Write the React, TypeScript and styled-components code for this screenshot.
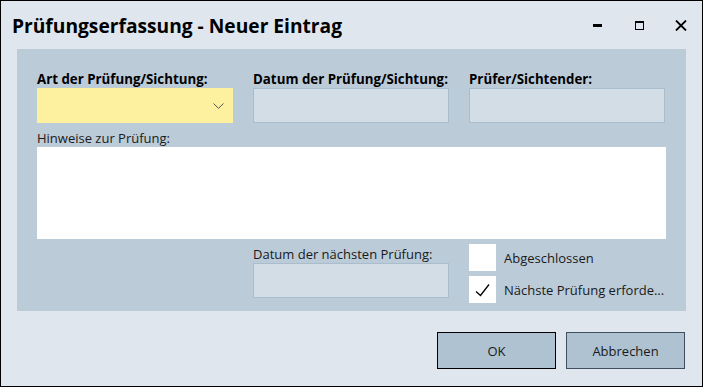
import React from "react";
import styled, { createGlobalStyle } from "styled-components";

const Global = createGlobalStyle`
  html, body { margin: 0; padding: 0; background: #dfe6ee; }
  * { box-sizing: border-box; }
  body { font-family: "Open Sans", "Noto Sans", "Liberation Sans", sans-serif; }
`;

const Window = styled.div`
  width: 703px;
  height: 387px;
  border: 1px solid #000;
  background: #dfe6ee;
  display: flex;
  flex-direction: column;
  color: #111;
`;

const TitleBar = styled.div`
  height: 48px;
  display: flex;
  align-items: center;
  padding-left: 11px;
`;

const Title = styled.h1`
  margin: 0;
  font-size: 19.2px;
  font-weight: 700;
  letter-spacing: 0;
  flex: 1;
  color: #000;
`;

const Controls = styled.div`
  display: flex;
  align-items: center;
  height: 100%;
`;

const ControlButton = styled.div`
  width: 42px;
  height: 100%;
  display: flex;
  align-items: center;
  justify-content: center;
`;

const Panel = styled.div`
  margin: 0 16px;
  height: 262px;
  background: #bccbd8;
  padding: 22px 20px 0 20px;
  display: flex;
  flex-direction: column;
`;

const Row = styled.div<{ $top?: number }>`
  display: grid;
  grid-template-columns: 196px 196px 196px;
  column-gap: 20px;
  margin-top: ${(p) => p.$top ?? 0}px;
`;

const Field = styled.div<{ $offset?: number; $top?: number }>`
  display: flex;
  flex-direction: column;
  padding-top: ${(p) => p.$offset ?? 0}px;
  margin-top: ${(p) => p.$top ?? 0}px;
`;

const Label = styled.label<{ $bold?: boolean }>`
  display: block;
  height: 17px;
  line-height: 17px;
  font-size: ${(p) => (p.$bold ? "13.3px" : "13px")};
  font-weight: ${(p) => (p.$bold ? 700 : 400)};
  color: ${(p) => (p.$bold ? "#000" : "#1a1a1a")};
  white-space: nowrap;
`;

const Input = styled.div`
  height: 35px;
  background: #d3dde6;
  border: 1px solid #aabdcc;
`;

const Combo = styled.div`
  height: 35px;
  background: #fdf1a0;
  display: flex;
  align-items: center;
  justify-content: flex-end;
  padding-right: 9px;
`;

const Notes = styled.div`
  height: 92px;
  width: 629px;
  background: #fff;
`;

const Checks = styled.div`
  display: flex;
  flex-direction: column;
  gap: 5px;
`;

const CheckRow = styled.div`
  display: flex;
  align-items: center;
  gap: 8px;
  height: 27px;
`;

const Box = styled.div`
  width: 27px;
  height: 27px;
  background: #fff;
  display: flex;
  align-items: center;
  justify-content: center;
  flex-shrink: 0;
`;

const CheckText = styled.span`
  font-size: 13px;
  color: #1a1a1a;
  white-space: nowrap;
`;

const Footer = styled.div`
  display: flex;
  justify-content: flex-end;
  gap: 10px;
  padding: 21px 17px 0 0;
`;

const Button = styled.button<{ $default?: boolean }>`
  width: 119px;
  height: 37px;
  background: #aec2d1;
  border: 1px solid ${(p) => (p.$default ? "#000" : "#3d4f61")};
  font-family: inherit;
  font-size: 13px;
  color: #1a1a1a;
  padding: 0;
`;

export default function App() {
  return (
    <>
      <Global />
      <Window>
        <TitleBar>
          <Title>Prüfungserfassung - Neuer Eintrag</Title>
          <Controls>
            <ControlButton>
              <svg width="9" height="9" viewBox="0 0 9 9">
                <rect x="0" y="3" width="9" height="3" fill="#000" />
              </svg>
            </ControlButton>
            <ControlButton>
              <svg width="9" height="9" viewBox="0 0 9 9">
                <rect x="0.5" y="0.5" width="8" height="8" fill="none" stroke="#000" strokeWidth="1" />
                <rect x="0" y="0" width="9" height="2" fill="#000" />
              </svg>
            </ControlButton>
            <ControlButton>
              <svg width="12" height="11" viewBox="0 0 12 11">
                <path d="M1 0.5 L11 10.5 M11 0.5 L1 10.5" stroke="#000" strokeWidth="1.8" />
              </svg>
            </ControlButton>
          </Controls>
        </TitleBar>
        <Panel>
          <Row>
            <Field>
              <Label $bold>Art der Prüfung/Sichtung:</Label>
              <Combo>
                <svg width="11" height="6" viewBox="0 0 11 6">
                  <path d="M0.5 0.5 L5.5 5.3 L10.5 0.5" fill="none" stroke="#555" strokeWidth="1" />
                </svg>
              </Combo>
            </Field>
            <Field>
              <Label $bold>Datum der Prüfung/Sichtung:</Label>
              <Input />
            </Field>
            <Field>
              <Label $bold>Prüfer/Sichtender:</Label>
              <Input />
            </Field>
          </Row>
          <Field $top={7}>
            <Label>Hinweise zur Prüfung:</Label>
            <Notes />
          </Field>
          <Row $top={5}>
            <div />
            <Field $offset={2}>
              <Label>Datum der nächsten Prüfung:</Label>
              <Input />
            </Field>
            <Checks>
              <CheckRow>
                <Box />
                <CheckText>Abgeschlossen</CheckText>
              </CheckRow>
              <CheckRow>
                <Box>
                  <svg width="15" height="14" viewBox="0 0 15 14">
                    <path d="M1 8.5 L5.5 12.5 L14 1.5" fill="none" stroke="#000" strokeWidth="1.3" />
                  </svg>
                </Box>
                <CheckText>Nächste Prüfung erforde...</CheckText>
              </CheckRow>
            </Checks>
          </Row>
        </Panel>
        <Footer>
          <Button $default>OK</Button>
          <Button>Abbrechen</Button>
        </Footer>
      </Window>
    </>
  );
}
